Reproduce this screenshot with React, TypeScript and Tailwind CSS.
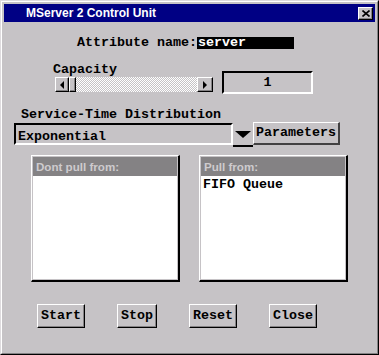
import React from "react";

const mono = { fontFamily: '"Liberation Mono", "DejaVu Sans Mono", monospace' };
const sans = { fontFamily: '"Liberation Sans", Arial, sans-serif' };

function Raised({ className = "", children }: { className?: string; children?: React.ReactNode }) {
  return (
    <div
      className={
        "flex items-center justify-center bg-[#c6c3c6] border-t border-l border-white border-r border-b border-r-black border-b-black shadow-[inset_-1px_-1px_0_#848284] " +
        className
      }
    >
      {children}
    </div>
  );
}

function Btn({ label, w }: { label: string; w: string }) {
  return (
    <Raised className={"h-[24px] " + w}>
      <span style={mono} className="block text-[13.33px] font-bold leading-[14px] text-black">
        {label}
      </span>
    </Raised>
  );
}

function ListBox({ title, items }: { title: string; items: string[] }) {
  return (
    <div className="w-[149px] h-[127px] flex flex-col border-t border-l border-white border-r-2 border-b-2 border-r-black border-b-black bg-[#c6c3c6] p-px">
      <div className="h-[19px] bg-[#848284] flex items-center pl-[3px]">
        <span style={sans} className="block text-[11.6px] font-bold leading-[14px] text-[#cecbce]">
          {title}
        </span>
      </div>
      <div className="flex-1 bg-white pt-[2px] pl-[2px] leading-[14px]">
        {items.map((it) => (
          <div key={it} style={mono} className="text-[13.33px] font-bold leading-[14px] text-black">
            {it}
          </div>
        ))}
      </div>
    </div>
  );
}

export default function App() {
  return (
    <div className="w-[379px] h-[355px] bg-[#c6c3c6] border-t border-l border-[#dedbde] border-r border-b border-r-black border-b-black">
      <div className="w-full h-full border-t border-l border-white border-r border-b border-r-[#848284] border-b-[#848284] p-[2px] flex flex-col">
        {/* Title bar */}
        <div className="h-[18px] bg-[#000084] flex items-center shrink-0">
          <span style={sans} className="block ml-[22px] text-[12px] font-bold leading-[14px] text-white">
            MServer 2 Control Unit
          </span>
          <div className="ml-auto mr-[2px]">
            <Raised className="w-[15px] h-[13px]">
              <svg width="8" height="7" viewBox="0 0 8 7">
                <path d="M0.5 0.5 L7.5 6.5 M7.5 0.5 L0.5 6.5" stroke="#000" strokeWidth="1.6" />
              </svg>
            </Raised>
          </div>
        </div>

        {/* Content */}
        <div className="flex-1 flex flex-col">
          {/* Attribute name */}
          <div className="mt-[15px] ml-[73px] flex items-center h-[12px]">
            <span style={mono} className="block text-[13.33px] font-bold leading-[12px] text-black whitespace-pre">
              Attribute name:
            </span>
            <div className="w-[97px] h-[12px] bg-black flex items-center pl-px">
              <span style={mono} className="block text-[13.33px] font-bold leading-[12px] text-white">
                server
              </span>
            </div>
          </div>

          {/* Capacity */}
          <div className="mt-[14px] ml-[49px] flex items-start">
            <div className="flex flex-col">
              <span style={mono} className="block text-[13.33px] font-bold leading-[14px] text-black">
                Capacity
              </span>
              <div className="ml-[2px] w-[158px] h-[15px] flex">
                <Raised className="w-[14px] h-[15px]">
                  <div className="w-0 h-0 border-y-[4px] border-y-transparent border-r-[4px] border-r-black" />
                </Raised>
                <Raised className="w-[7px] h-[15px]" />
                <div className="flex-1 h-[15px] bg-[image:repeating-conic-gradient(#ffffff_0%_25%,#c6c3c6_0%_50%)] bg-[length:2px_2px]" />
                <Raised className="w-[16px] h-[15px]">
                  <div className="w-0 h-0 border-y-[4px] border-y-transparent border-l-[4px] border-l-black" />
                </Raised>
              </div>
            </div>
            <div className="ml-[9px] mt-[8px] w-[91px] h-[23px] bg-[#c6c3c6] border-t-2 border-l-2 border-black border-r-2 border-b-2 border-r-white border-b-white flex items-center justify-center">
              <span style={mono} className="block text-[13.33px] font-bold leading-[14px] text-black">
                1
              </span>
            </div>
          </div>

          {/* Service-Time Distribution */}
          <div style={mono} className="mt-[14px] ml-[17px] h-[14px] text-[13.33px] font-bold leading-[14px] text-black">
            Service-Time Distribution
          </div>
          <div className="ml-[10px] flex items-start">
            <div className="mt-px w-[219px] h-[22px] border-t-2 border-l-2 border-black border-r-2 border-b-2 border-r-white border-b-white pt-[5px] pl-[2px]">
              <div style={mono} className="text-[13.33px] font-bold leading-[14px] text-black">
                Exponential
              </div>
            </div>
            <div className="mt-px w-[20px] h-[24px] border-b-2 border-black flex items-center justify-center">
              <div className="w-0 h-0 border-x-[8px] border-x-transparent border-t-[7px] border-t-black" />
            </div>
            <div className="w-[87px] h-[23px] flex items-center justify-center bg-[#c6c3c6] border-t border-l border-white border-r-2 border-b-2 border-r-[#424142] border-b-[#424142]">
              <span style={mono} className="block text-[13.33px] font-bold leading-[14px] text-black">
                Parameters
              </span>
            </div>
          </div>

          {/* Lists */}
          <div className="mt-[8px] ml-[27px] flex gap-[19px]">
            <ListBox title="Dont pull from:" items={[]} />
            <ListBox title="Pull from:" items={["FIFO Queue"]} />
          </div>

          {/* Buttons */}
          <div className="mt-[22px] ml-[33px] flex gap-[32px]">
            <Btn label="Start" w="w-[48px]" />
            <Btn label="Stop" w="w-[40px]" />
            <Btn label="Reset" w="w-[48px]" />
            <Btn label="Close" w="w-[48px]" />
          </div>
        </div>
      </div>
    </div>
  );
}
